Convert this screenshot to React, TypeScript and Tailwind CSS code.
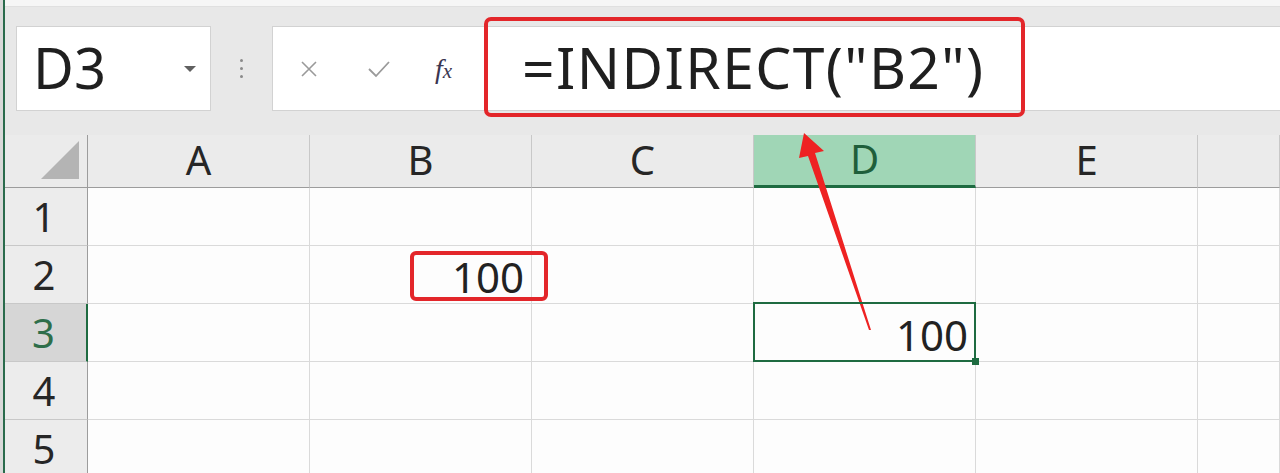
import React from "react";

const COLS = ["A", "B", "C", "D", "E", ""];
const ROWS = [1, 2, 3, 4, 5];
const FONT = { fontFamily: '"Noto Sans", "Open Sans", sans-serif' };

function HeaderCell({ label, active }: { label: string; active?: boolean }) {
  return (
    <div
      className={
        active
          ? "h-[53px] flex items-center justify-center border-r border-[#c8c8c8] border-b-[3px] border-b-[#1e6b41] bg-[#a0d6b6] text-[#1f5f3b] text-[40px]"
          : "h-[53px] flex items-center justify-center border-r border-[#c8c8c8] border-b border-b-[#9c9c9c] bg-[#ebebeb] text-[#262626] text-[40px]"
      }
    >
      <span className="leading-none -mt-[2px]">{label}</span>
    </div>
  );
}

function RowHeader({ n, active }: { n: number; active?: boolean }) {
  return (
    <div
      className={
        active
          ? "h-[58px] flex items-center justify-center bg-[#d6d6d6] text-[#2e6e4a] border-b border-[#c8c8c8] border-r-2 border-r-[#1e6b41] text-[40px]"
          : "h-[58px] flex items-center justify-center bg-[#ececec] text-[#262626] border-b border-[#c8c8c8] border-r border-r-[#9c9c9c] text-[40px]"
      }
    >
      <span className="leading-none -ml-[4px]">{n}</span>
    </div>
  );
}

function Cell({ row, col }: { row: number; col: number }) {
  const isB2 = row === 2 && col === 1;
  const isD3 = row === 3 && col === 3;
  return (
    <div className="relative h-[58px] bg-[#fdfdfd] border-r border-b border-[#dadada] flex items-center justify-end pr-[7px] pt-[4px] text-[#222] text-[42px]">
      {(isB2 || isD3) && <span className="leading-none">100</span>}
      {isB2 && (
        <div className="absolute z-10 left-[100px] -right-[17px] top-[5px] bottom-[2px] border-[4px] border-[#e3262a] rounded-[6px]" />
      )}
      {isD3 && (
        <>
          <div className="absolute z-10 -left-[1px] -top-[2px] -right-[1px] -bottom-[1px] border-2 border-[#1e6b41]" />
          <div className="absolute z-10 -right-[4px] -bottom-[4px] w-[7px] h-[7px] bg-[#1e6b41]" />
        </>
      )}
    </div>
  );
}

export default function App() {
  return (
    <div className="relative w-[1280px] h-[473px] overflow-hidden flex bg-[#e8e8e8]" style={FONT}>
      <div className="w-[3px] shrink-0 bg-[#d9d9d9]" />
      <div className="w-[2px] shrink-0 bg-[#2a6b4c]" />
      <div className="flex-1 flex flex-col min-w-0">
        <div className="h-[7px] shrink-0 bg-[#f6f6f6] border-b border-[#e0e0e0]" />
        <div className="flex items-start shrink-0 pt-[19px] h-[128px]">
          <div className="ml-[11px] w-[195px] h-[85px] bg-white border border-[#d2d2d2] flex items-center pl-[16px] pr-[14px]">
            <span className="text-[56px] text-[#1f1f1f] leading-none -mt-[4px]">D3</span>
            <span className="ml-auto w-0 h-0 border-l-[6px] border-r-[6px] border-t-[6px] border-l-transparent border-r-transparent border-t-[#606060]" />
          </div>
          <div className="w-[61px] h-[85px] flex flex-col items-center justify-center gap-[5px]">
            <span className="w-[3px] h-[3px] rounded-full bg-[#8a8a8a]" />
            <span className="w-[3px] h-[3px] rounded-full bg-[#8a8a8a]" />
            <span className="w-[3px] h-[3px] rounded-full bg-[#8a8a8a]" />
          </div>
          <div className="flex-1 h-[85px] bg-white border border-[#d2d2d2] border-r-0 flex items-center">
            <svg width="20" height="20" viewBox="0 0 20 20" className="ml-[26px]">
              <path d="M3 3 L17 17 M17 3 L3 17" stroke="#9a9a9a" strokeWidth="1.6" fill="none" />
            </svg>
            <svg width="24" height="20" viewBox="0 0 24 20" className="ml-[48px]">
              <path d="M2 10 L9 17 L22 3" stroke="#9a9a9a" strokeWidth="1.8" fill="none" />
            </svg>
            <span
              className="ml-[44px] text-[28px] text-[#3a3550] italic leading-none"
              style={{ fontFamily: '"Liberation Serif", "DejaVu Serif", serif' }}
            >
              f<span className="text-[21px]">x</span>
            </span>
            <span className="ml-[70px] text-[57px] text-[#1f1f1f] tracking-[1.4px] leading-none -mt-[2px]">
              =INDIRECT("B2")
            </span>
          </div>
        </div>
        <div className="grid shrink-0 grid-cols-[83px_222px_222px_222px_222px_222px_1fr]">
          <div className="h-[53px] bg-[#ebebeb] border-r border-[#9c9c9c] border-b border-b-[#9c9c9c] flex items-end justify-end pr-[8px] pb-[8px]">
            <svg width="38" height="38" viewBox="0 0 38 38">
              <polygon points="38,0 38,38 0,38" fill="#b4b4b4" />
            </svg>
          </div>
          {COLS.map((c, i) => (
            <HeaderCell key={i} label={c} active={c === "D"} />
          ))}
          {ROWS.map((r) => (
            <React.Fragment key={r}>
              <RowHeader n={r} active={r === 3} />
              {COLS.map((_, ci) => (
                <Cell key={ci} row={r} col={ci} />
              ))}
            </React.Fragment>
          ))}
        </div>
      </div>
      <div className="absolute left-[484px] top-[17px] w-[541px] h-[100px] border-[4px] border-[#e3262a] rounded-[7px]" />
      <svg className="absolute left-0 top-0 pointer-events-none" width="1280" height="473" viewBox="0 0 1280 473">
        <polygon
          points="804,133 824,151 815,153 871,330 869,330 808,156 799,158"
          fill="#ee2222"
        />
      </svg>
    </div>
  );
}
